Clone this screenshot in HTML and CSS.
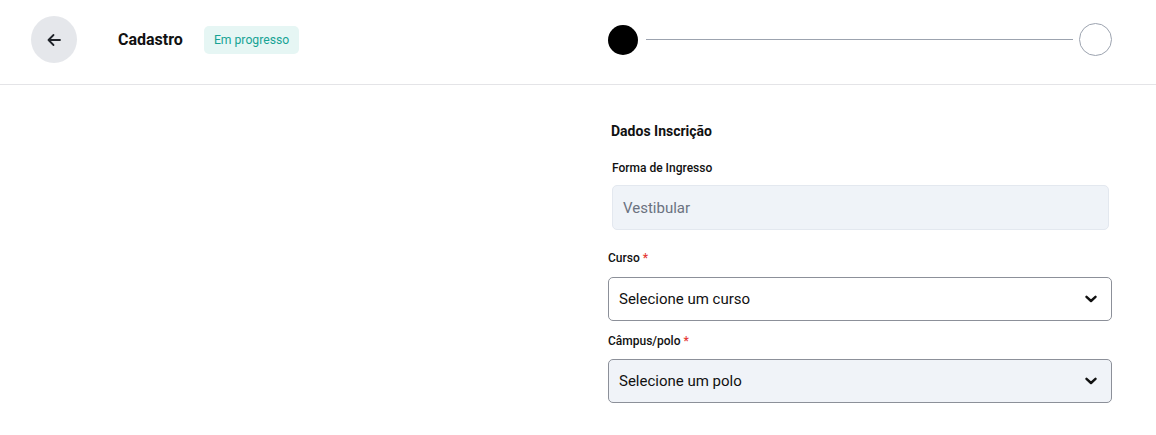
FILE: index.html
```html
<!DOCTYPE html>
<html lang="pt-BR">
<head>
<meta charset="utf-8">
<title>Cadastro</title>
<link rel="stylesheet" href="styles.css">
</head>
<body>
<header class="topbar">
  <div class="topbar-left">
    <button class="back-btn" aria-label="Voltar">
      <svg width="16" height="16" viewBox="0 0 16 16" fill="none" stroke="#1f2329" stroke-width="1.8" stroke-linecap="round" stroke-linejoin="round"><path d="M14 8H2.5M7.5 3L2.5 8l5 5"/></svg>
    </button>
    <h1 class="title">Cadastro</h1>
    <span class="badge">Em progresso</span>
  </div>
  <div class="stepper">
    <span class="step step-done"></span>
    <span class="step-line"></span>
    <span class="step step-todo"></span>
  </div>
</header>
<main class="content">
  <form class="form">
    <section class="group">
      <h2 class="group-title">Dados Inscrição</h2>
      <label class="label label-first">Forma de Ingresso</label>
      <div class="input input-disabled">Vestibular</div>
    </section>
    <label class="label label-curso">Curso <span class="req">*</span></label>
    <div class="select">
      <span>Selecione um curso</span>
      <svg width="12" height="8" viewBox="0 0 12 8" fill="none" stroke="#111" stroke-width="2.4" stroke-linecap="round" stroke-linejoin="round"><path d="M1.5 1.8L6 6l4.5-4.2"/></svg>
    </div>
    <label class="label label-campus">Câmpus/polo <span class="req">*</span></label>
    <div class="select select-muted">
      <span>Selecione um polo</span>
      <svg width="12" height="8" viewBox="0 0 12 8" fill="none" stroke="#111" stroke-width="2.4" stroke-linecap="round" stroke-linejoin="round"><path d="M1.5 1.8L6 6l4.5-4.2"/></svg>
    </div>
  </form>
</main>
</body>
</html>
```
FILE: styles.css
```css
* { box-sizing: border-box; }
html, body { margin: 0; padding: 0; background: #fff; }
body {
  font-family: Roboto, "Liberation Sans", Arial, sans-serif;
  color: #111;
  width: 1156px;
  height: 435px;
  overflow: hidden;
}
.topbar {
  height: 85px;
  border-bottom: 1px solid #e4e4e7;
  display: flex;
  align-items: center;
  padding: 0 44px 5px 31px;
  justify-content: space-between;
}
.topbar-left {
  display: flex;
  align-items: center;
}
.back-btn {
  width: 46px;
  height: 47px;
  border-radius: 50%;
  border: none;
  background: #e5e7eb;
  display: flex;
  align-items: center;
  justify-content: center;
  padding: 0;
  margin-right: 41px;
}
.title {
  margin: 0 21px 0 0;
  font-size: 16px;
  font-weight: 700;
  line-height: 20px;
}
.badge {
  background: #e6f6f4;
  color: #17a394;
  font-size: 12.2px;
  line-height: 28px;
  height: 28px;
  padding: 0 10px;
  border-radius: 5px;
}
.stepper {
  width: 504px;
  display: flex;
  align-items: center;
}
.step {
  flex: none;
  border-radius: 50%;
}
.step-done {
  width: 30px;
  height: 30px;
  background: #000;
}
.step-todo {
  width: 33px;
  height: 33px;
  border: 1px solid #9ca3af;
  background: #fff;
}
.step-line {
  flex: 1;
  height: 1px;
  background: #9ca3af;
  margin: 0 6px 0 8px;
}
.content {
  padding: 36px 0 0 608px;
}
.form {
  width: 504px;
}
.group {
  padding: 0 3px 0 4px;
}
.group-title {
  margin: 0 0 0 -1px;
  font-size: 14px;
  font-weight: 700;
  line-height: 20px;
}
.label {
  display: block;
  font-size: 12px;
  font-weight: 500;
  line-height: 16px;
  color: #111;
}
.label-first { margin-top: 19px; margin-bottom: 9px; }
.label-curso { margin-top: 20px; margin-bottom: 11px; }
.label-campus { margin-top: 12px; margin-bottom: 10px; }
.req { color: #e53935; }
.input {
  height: 45px;
  border-radius: 5px;
  padding: 0 10px;
  display: flex;
  align-items: center;
  font-size: 15px;
}
.input-disabled {
  background: #eff3f8;
  border: 1px solid #e3e8ef;
  color: #6b7280;
}
.select {
  height: 44px;
  border: 1px solid #8c9099;
  border-radius: 5px;
  padding: 0 14px 0 10px;
  display: flex;
  align-items: center;
  justify-content: space-between;
  font-size: 15px;
  color: #111;
  background: #fff;
}
.select-muted {
  background: #f0f3f8;
}
```
